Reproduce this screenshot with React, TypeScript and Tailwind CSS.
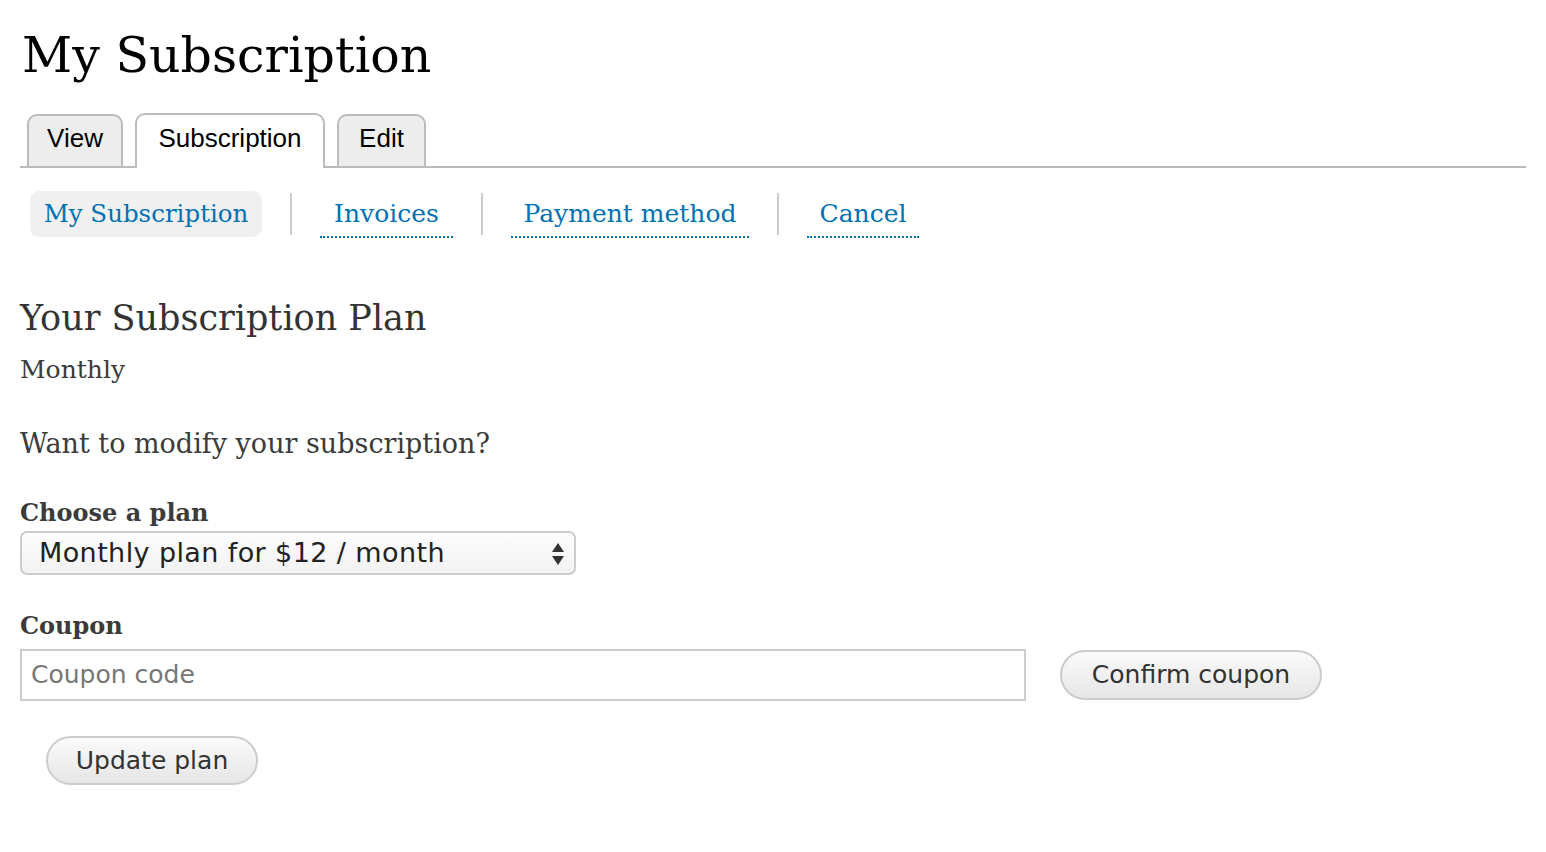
import React from "react";

const serif = { fontFamily: '"DejaVu Serif", "Liberation Serif", serif' } as const;
const sans = { fontFamily: '"Liberation Sans", Arial, sans-serif' } as const;
const lucida = { fontFamily: '"DejaVu Sans", "Noto Sans", sans-serif' } as const;

export default function App() {
  return (
    <div className="min-h-[852px] w-[1546px] bg-white pl-5 pr-5 text-[#3b3b3b]" style={serif}>
      <h1 className="pt-[24px] pl-[2px] text-[49px] leading-[64px] text-black">My Subscription</h1>

      <div className="mt-[26px] flex h-[54px] items-end border-b-2 border-[#bbbbbb] pl-[7px]" style={sans}>
        <div className="mr-3 -mb-[2px] flex h-[54px] w-[96px] items-start justify-center rounded-t-[10px] border-2 border-[#bbbbbb] bg-[#ededed] pt-[3px] text-[26px] text-black">View</div>
        <div className="mr-3 -mb-[2px] flex h-[55px] w-[190px] items-start justify-center rounded-t-[10px] border-2 border-b-0 border-[#bbbbbb] bg-white pt-[4px] text-[26px] text-black">Subscription</div>
        <div className="-mb-[2px] flex h-[54px] w-[89px] items-start justify-center rounded-t-[10px] border-2 border-[#bbbbbb] bg-[#ededed] pt-[3px] text-[26px] text-black">Edit</div>
      </div>

      <div className="mt-[23px] flex h-[47px] items-start pl-[10px] text-[25px] text-[#0071b3]">
        <div className="flex h-[46px] w-[232px] items-center justify-center rounded-[9px] bg-[#f0f0f0] text-[24.5px]">My Subscription</div>
        <div className="mx-[28px] mt-[2px] h-[42px] w-[2px] bg-[#cccccc]" />
        <div className="flex h-[47px] w-[133px] items-center justify-center border-b-2 border-dotted border-[#0071b3]">Invoices</div>
        <div className="mx-[28px] mt-[2px] h-[42px] w-[2px] bg-[#cccccc]" />
        <div className="flex h-[47px] w-[238px] items-center justify-center border-b-2 border-dotted border-[#0071b3]">Payment method</div>
        <div className="mx-[28px] mt-[2px] h-[42px] w-[2px] bg-[#cccccc]" />
        <div className="flex h-[47px] w-[112px] items-center justify-center border-b-2 border-dotted border-[#0071b3]">Cancel</div>
      </div>

      <h2 className="mt-[56px] text-[35px] leading-[48px] text-[#333]">Your Subscription Plan</h2>
      <div className="mt-[10px] text-[25px] leading-[36px]">Monthly</div>
      <div className="mt-[38px] text-[27px] leading-[36px]">Want to modify your subscription?</div>

      <div className="mt-[34px] text-[24px] font-bold leading-[34px]">Choose a plan</div>
      <div
        className="relative mt-[1px] flex h-[44px] w-[556px] items-center rounded-[7px] border-2 border-[#cccccc] bg-gradient-to-b from-[#fdfdfd] to-[#f2f2f2] pl-[17px] text-[27px] tracking-[0.4px] text-[#222]"
        style={lucida}
      >
        Monthly plan for $12 / month
        <svg className="absolute right-[9px] top-[8px]" width="14" height="26" viewBox="0 0 14 26">
          <path d="M7 2 L13 11 L1 11 Z" fill="#333" />
          <path d="M7 24 L13 15 L1 15 Z" fill="#333" />
        </svg>
      </div>

      <div className="mt-[34px] text-[24px] font-bold leading-[34px]">Coupon</div>
      <div className="mt-[6px] flex items-center">
        <div className="flex h-[52px] w-[1006px] items-center border-2 border-[#cccccc] pl-[9px] text-[25px] text-[#777]" style={lucida}>
          Coupon code
        </div>
        <div
          className="ml-[34px] flex h-[50px] w-[262px] items-center justify-center rounded-full border-2 border-[#cccccc] bg-gradient-to-b from-[#fafafa] to-[#e6e6e6] text-[25px] text-[#333]"
          style={lucida}
        >
          Confirm coupon
        </div>
      </div>

      <div
        className="ml-[26px] mt-[35px] flex h-[49px] w-[212px] items-center justify-center rounded-full border-2 border-[#cccccc] bg-gradient-to-b from-[#fafafa] to-[#e6e6e6] text-[25px] text-[#333]"
        style={lucida}
      >
        Update plan
      </div>
    </div>
  );
}
